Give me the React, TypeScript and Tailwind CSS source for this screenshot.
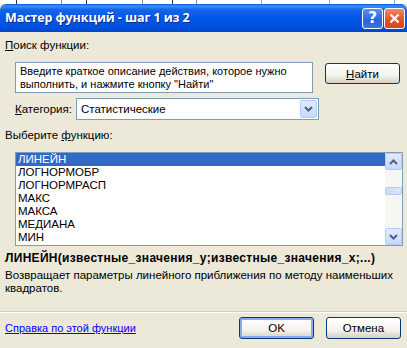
import React from "react";

const items = ["ЛИНЕЙН", "ЛОГНОРМОБР", "ЛОГНОРМРАСП", "МАКС", "МАКСА", "МЕДИАНА", "МИН"];

function Chevron({ up }: { up?: boolean }) {
  return (
    <svg width="9" height="6" viewBox="0 0 9 6">
      <path
        d={up ? "M1 5 L4.5 1.5 L8 5" : "M1 1 L4.5 4.5 L8 1"}
        fill="none"
        stroke="#4D6185"
        strokeWidth="2"
      />
    </svg>
  );
}

function ScrollBtn({ up }: { up?: boolean }) {
  return (
    <div className="w-[17px] h-[17px] rounded-[2px] border border-[#B7CAF5] bg-[linear-gradient(180deg,#E1EAFE_0%,#C8D7FC_100%)] flex items-center justify-center">
      <Chevron up={up} />
    </div>
  );
}

export default function App() {
  return (
    <div className="w-[407px] h-[348px] overflow-hidden flex flex-col bg-[#ECE9D8] font-['Liberation_Sans',sans-serif] text-[11.5px] leading-[14px] text-black">
      {/* spreadsheet strip behind */}
      <div className="h-[4px] bg-white flex shrink-0">
        <div className="w-[17px] border-r border-[#333]" />
        <div className="w-[45px] border-r border-[#888]" />
        <div className="w-[25px] border-r border-[#333]" />
        <div className="w-[56px] border-r border-[#888]" />
        <div className="w-[30px] border-r border-[#333]" />
        <div className="w-[24px] border-r border-[#888]" />
        <div className="w-[65px] border-r border-[#aaa]" />
        <div className="w-[68px] border-r border-[#aaa]" />
        <div className="w-[65px] border-r border-[#aaa]" />
      </div>
      {/* title bar */}
      <div className="h-[28px] shrink-0 flex items-center pl-[5px] pr-[2px] rounded-t-[6px] bg-[linear-gradient(180deg,#0A5CE6_0%,#3C8DF8_8%,#1665EA_20%,#0058E6_50%,#0050DC_85%,#0045C8_100%)]">
        <span className="text-white font-bold text-[12.5px] font-['Open_Sans',sans-serif] tracking-[-0.1px] [text-shadow:1px_1px_0_#0C2D8C]">
          Мастер функций - шаг 1 из 2
        </span>
        <div className="ml-auto flex gap-[1px]">
          <div className="w-[21px] h-[21px] rounded-[3px] border border-white bg-[linear-gradient(180deg,#5A90F5_0%,#2663E0_60%,#3B74EA_100%)] flex items-center justify-center text-white font-bold text-[15px] font-['DejaVu_Sans',sans-serif]">
            ?
          </div>
          <div className="w-[21px] h-[21px] rounded-[3px] border border-white bg-[linear-gradient(180deg,#F08A6A_0%,#E2542B_55%,#D6461F_100%)] flex items-center justify-center">
            <svg width="11" height="11" viewBox="0 0 11 11">
              <path d="M1.5 1.5 L9.5 9.5 M9.5 1.5 L1.5 9.5" stroke="white" strokeWidth="2.2" />
            </svg>
          </div>
        </div>
      </div>
      {/* body */}
      <div className="flex-1 flex flex-col pt-[6px]">
        <div className="pl-[5px]">
          <span className="underline">П</span>оиск функции:
        </div>
        <div className="flex items-start mt-[10px] pl-[15px]">
          <div className="w-[298px] h-[31px] bg-white border border-[#7F9DB9] px-[4px] pt-[2px] leading-[13px] text-[11px]">
            Введите краткое описание действия, которое нужно выполнить, и нажмите кнопку "Найти"
          </div>
          <div className="ml-[12px] mt-[1px] w-[75px] h-[21px] rounded-[3px] border border-[#003C74] bg-[linear-gradient(180deg,#FFFFFF_0%,#F4F3EE_60%,#D6D0C5_100%)] flex items-center justify-center">
            <span className="underline">Н</span>айти
          </div>
        </div>
        <div className="flex items-center mt-[5px] pl-[15px]">
          <span>
            <span className="underline">К</span>атегория:
          </span>
          <div className="ml-[4px] w-[243px] h-[22px] bg-white border border-[#7F9DB9] flex items-center pl-[4px] pr-[1px]">
            <span>Статистические</span>
            <div className="ml-auto w-[17px] h-[18px] rounded-[2px] border border-[#B7CAF5] bg-[linear-gradient(180deg,#E1EAFE_0%,#C8D7FC_100%)] flex items-center justify-center">
              <Chevron />
            </div>
          </div>
        </div>
        <div className="mt-[8px] pl-[5px]">
          Выберите <span className="underline">ф</span>ункцию:
        </div>
        <div className="mt-[10px] ml-[15px] mr-[4px] h-[94px] bg-white border border-[#7F9DB9] flex">
          <div className="flex-1 flex flex-col leading-[13px]">
            {items.map((it, i) => (
              <div
                key={it}
                className={
                  i === 0
                    ? "h-[13px] pl-[2px] bg-[#316AC5] text-white"
                    : "h-[13px] pl-[2px]"
                }
              >
                {it}
              </div>
            ))}
          </div>
          <div className="w-[17px] bg-[#F7F6F1] flex flex-col">
            <ScrollBtn up />
            <div className="flex-1 flex flex-col">
              <div className="h-[17px]" />
              <div className="h-[8px] rounded-[2px] border border-[#B7CAF5] bg-[linear-gradient(90deg,#C8D7FC_0%,#DCE6FE_100%)]" />
            </div>
            <ScrollBtn />
          </div>
        </div>
        <div className="mt-[5px] pl-[5px] font-bold text-[12px] tracking-[0.3px]">
          ЛИНЕЙН(известные_значения_y;известные_значения_x;...)
        </div>
        <div className="mt-[4px] pl-[5px] pr-[6px] leading-[13px]">
          Возвращает параметры линейного приближения по методу наименьших квадратов.
        </div>
        <div className="mt-[16px] h-[2px] border-t border-[#D0CDBF] border-b border-b-white" />
        <div className="mt-[4px] flex items-center pl-[5px] pr-[6px]">
          <span className="text-[#0000FF] underline text-[11px]">Справка по этой функции</span>
          <div className="ml-auto w-[75px] h-[22px] rounded-[3px] border border-[#003C74] bg-[linear-gradient(180deg,#FFFFFF_0%,#F4F3EE_60%,#D6D0C5_100%)] flex items-center justify-center shadow-[inset_0_0_0_2px_#8AAAEB]">
            OK
          </div>
          <div className="ml-[12px] w-[75px] h-[22px] rounded-[3px] border border-[#003C74] bg-[linear-gradient(180deg,#FFFFFF_0%,#F4F3EE_60%,#D6D0C5_100%)] flex items-center justify-center">
            Отмена
          </div>
        </div>
      </div>
    </div>
  );
}
